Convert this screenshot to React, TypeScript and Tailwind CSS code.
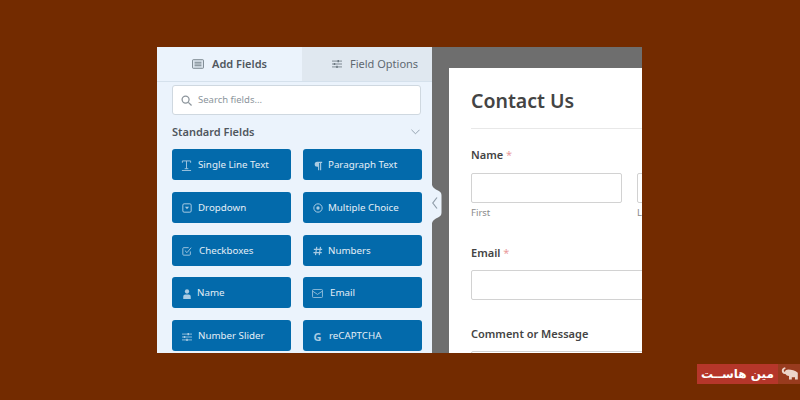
import { ReactNode } from "react";

const sliderIcon = (
  <svg viewBox="0 0 12 12" className="w-[10px] h-[10px]" fill="none" stroke="currentColor" strokeWidth="1">
    <path d="M0 2.500h12M0 6h12M0 9.500h12" />
    <path d="M7.500 1.200v2.600M3 4.700v2.600M6 8.200v2.600" strokeWidth="1.800" />
  </svg>
);

const fields: { label: string; icon: ReactNode; gap: string }[] = [
  {
    label: "Single Line Text",
    gap: "gap-[6px]",
    icon: (
      <svg viewBox="0 0 12 12" className="w-[11px] h-[11px]" fill="none" stroke="currentColor" strokeWidth="1">
        <path d="M1.500 3V1h9v2M6 1v8.500M4 9.500h4M1 11.500h10" />
      </svg>
    ),
  },
  {
    label: "Paragraph Text",
    gap: "gap-[5px]",
    icon: (
      <svg viewBox="0 0 12 12" className="w-[10px] h-[10px]" fill="currentColor">
        <path d="M5 1h6v1.500H9.800V11H8.500V2.500H7.400V11H6.100V7H5a3 3 0 0 1 0-6z" />
      </svg>
    ),
  },
  {
    label: "Dropdown",
    gap: "gap-[6px]",
    icon: (
      <svg viewBox="0 0 12 12" className="w-[10px] h-[10px]" fill="none" stroke="currentColor" strokeWidth="1.200">
        <rect x="1" y="1" width="10" height="10" rx="1.500" />
        <path d="M3.500 4.500h5L6 7.500z" fill="currentColor" stroke="none" />
      </svg>
    ),
  },
  {
    label: "Multiple Choice",
    gap: "gap-[5px]",
    icon: (
      <svg viewBox="0 0 12 12" className="w-[10px] h-[10px]" fill="none" stroke="currentColor" strokeWidth="1.200">
        <circle cx="6" cy="6" r="5" />
        <circle cx="6" cy="6" r="2" fill="currentColor" stroke="none" />
      </svg>
    ),
  },
  {
    label: "Checkboxes",
    gap: "gap-[7px]",
    icon: (
      <svg viewBox="0 0 12 12" className="w-[10px] h-[10px]" fill="none" stroke="currentColor" strokeWidth="1.100">
        <path d="M10 6.500V10a1 1 0 0 1-1 1H2a1 1 0 0 1-1-1V3a1 1 0 0 1 1-1h6" />
        <path d="M3.500 5.500 6 8l5-6" />
      </svg>
    ),
  },
  {
    label: "Numbers",
    gap: "gap-[5px]",
    icon: (
      <svg viewBox="0 0 12 12" className="w-[10px] h-[10px]" fill="none" stroke="currentColor" strokeWidth="1.400">
        <path d="M4.500 1 3 11M9 1 7.500 11M1 4h10M.5 8h10" />
      </svg>
    ),
  },
  {
    label: "Name",
    gap: "gap-[5px]",
    icon: (
      <svg viewBox="0 0 12 12" className="w-[10px] h-[10px]" fill="currentColor">
        <circle cx="6" cy="3" r="2.600" />
        <path d="M1.500 12V9a2.500 2.500 0 0 1 2.500-2.500h4A2.500 2.500 0 0 1 10.500 9v3z" />
      </svg>
    ),
  },
  {
    label: "Email",
    gap: "gap-[7px]",
    icon: (
      <svg viewBox="0 0 12 10" className="w-[11px] h-[9px]" fill="none" stroke="currentColor" strokeWidth=".9">
        <rect x=".5" y=".5" width="11" height="9" rx="1" />
        <path d="M.8 2.500 6 6l5.200-3.500" />
      </svg>
    ),
  },
  { label: "Number Slider", gap: "gap-[6px]", icon: sliderIcon },
  {
    label: "reCAPTCHA",
    gap: "gap-[6px]",
    icon: <span className="text-[11px] font-bold leading-none">G</span>,
  },
];

function FieldButton({ label, icon, gap }: { label: string; icon: ReactNode; gap: string }) {
  return (
    <div className={`h-[31px] rounded-[3px] bg-[#036aab] flex items-center pl-[9px] pt-[2px] text-[9.75px] ${gap}`}>
      <span className="w-[11px] flex justify-center text-[#a9cbe3]">{icon}</span>
      <span className="text-[#e3eef6]">{label}</span>
    </div>
  );
}

function Label({ text, required }: { text: string; required?: boolean }) {
  return (
    <p className="text-[11px] font-semibold text-[#444] leading-4">
      {text}
      {required && <span className="text-[#d63638] font-normal opacity-50"> *</span>}
    </p>
  );
}

export default function App() {
  return (
    <div className="w-[800px] h-[400px] bg-[#732b00] overflow-hidden pt-[47px] pl-[157px] font-['Noto_Sans',sans-serif]">
      <div className="relative w-[485px] h-[306px] flex overflow-hidden">
        {/* left panel */}
        <div className="w-[275px] bg-[#ebf3fc] shrink-0">
          <div className="flex h-[35px] border-b border-[#d5e1ec]">
            <div className="w-[145px] flex items-center justify-center gap-[8px] text-[11px] font-semibold text-[#50575e]">
              <svg viewBox="0 0 14 11" className="w-[12px] h-[10px]" fill="none" stroke="#6b7780" strokeWidth="1">
                <rect x=".5" y=".5" width="13" height="10" rx="1" fill="#dce5ee" />
                <path d="M3 3.500h8M3 5.500h8M3 7.500h8" />
              </svg>
              Add Fields
            </div>
            <div className="flex-1 bg-[#e0e8f0] flex items-center pl-[30px] gap-[8px] text-[11px] text-[#5f6870]">
              <span className="text-[#6b7780]">{sliderIcon}</span>
              Field Options
            </div>
          </div>
          <div className="pl-[15px] pr-[11px] pt-[3px]">
            <div className="h-[30px] bg-white border border-[#cfd8e0] rounded-[3px] flex items-center pl-[8px] gap-[6px] text-[9.5px] text-[#8c959c]">
              <svg viewBox="0 0 12 12" className="w-[11px] h-[11px]" fill="none" stroke="#8c959c" strokeWidth="1.400">
                <circle cx="5" cy="5" r="3.800" />
                <path d="m8 8 3.500 3.500" />
              </svg>
              Search fields...
            </div>
            <div className="flex items-center justify-between h-[16px] mt-[9px] pr-[1px] text-[11px] font-semibold text-[#50575e]">
              Standard Fields
              <svg viewBox="0 0 10 6" className="w-[9px] h-[6px]" fill="none" stroke="#8c9ba8" strokeWidth="1">
                <path d="m.5.500 4.500 4.500L9.500.500" />
              </svg>
            </div>
            <div className="grid grid-cols-[119px_119px] gap-x-[12px] gap-y-[11.75px] mt-[9px]">
              {fields.map((f) => (
                <FieldButton key={f.label} {...f} />
              ))}
            </div>
          </div>
        </div>

        {/* form preview */}
        <div className="flex-1 bg-[#6e6e6e] pt-[21px] pl-[17px]">
          <div className="h-full bg-white pl-[22px] overflow-hidden">
            <h1 className="text-[19.5px] font-semibold text-[#444] leading-[27px] pt-[19px] h-[61px] border-b border-[#e8e8e8]">Contact Us</h1>
            <div className="pt-[18px]">
              <Label text="Name" required />
            </div>
            <div className="flex gap-[15px] mt-[10px]">
              <div className="w-[151px] shrink-0">
                <div className="h-[30px] border border-[#d2d2d2] rounded-[2px]" />
                <p className="text-[9.5px] text-[#8a8a8a] mt-[3px]">First</p>
              </div>
              <div className="w-[151px] shrink-0">
                <div className="h-[30px] border border-[#d2d2d2] rounded-[2px]" />
                <p className="text-[9.5px] text-[#8a8a8a] mt-[3px]">Last</p>
              </div>
            </div>
            <div className="pt-[25px]">
              <Label text="Email" required />
            </div>
            <div className="w-[320px] h-[30px] mt-[9px] border border-[#d2d2d2] rounded-[2px]" />
            <div className="pt-[26px]">
              <Label text="Comment or Message" />
            </div>
            <div className="w-[320px] h-[30px] mt-[9px] border border-[#d2d2d2] rounded-[2px]" />
          </div>
        </div>

        {/* collapse handle */}
        <svg viewBox="0 0 10 38" className="absolute left-[275px] top-[138px] w-[10px] h-[38px]">
          <path d="M0 0c1 3 3 4 6 5.500 2.500 1.200 3.500 2.500 3.500 5v17c0 2.500-1 3.800-3.500 5C3 34 1 35 0 38z" fill="#ebf3fc" />
          <path d="M5 12.500.8 18 5 23.500" fill="none" stroke="#8f9ca8" strokeWidth="1.200" />
        </svg>
      </div>

      {/* logo badge */}
      <div className="flex h-[20px] w-[103px] ml-[540px] mt-[11px]">
        <div className="w-[81px] bg-[#b5362a] flex items-center justify-center text-white text-[12px] font-bold font-['DejaVu_Sans',sans-serif]" dir="rtl">
          مین هاســت
        </div>
        <div className="w-[22px] flex items-center justify-center bg-[#983b1e]">
          <svg viewBox="0 0 22 20" className="w-[18px] h-[16px]" fill="#ecd5ca">
            <path d="M2 6c0-2.500 1.500-4 4-4.500l1 1.500C5.500 3.500 4.500 4.500 4.500 6c0 1 .8 1.500 1.500.8C6.800 5.500 8 4.500 10 4.500c4 0 9 1 12 4V17h-3.500v-3h-4v3H11v-4.500c-2 0-3.500-1-4.500-2.500C4 10.500 2 8.500 2 6z" />
          </svg>
        </div>
      </div>
    </div>
  );
}
